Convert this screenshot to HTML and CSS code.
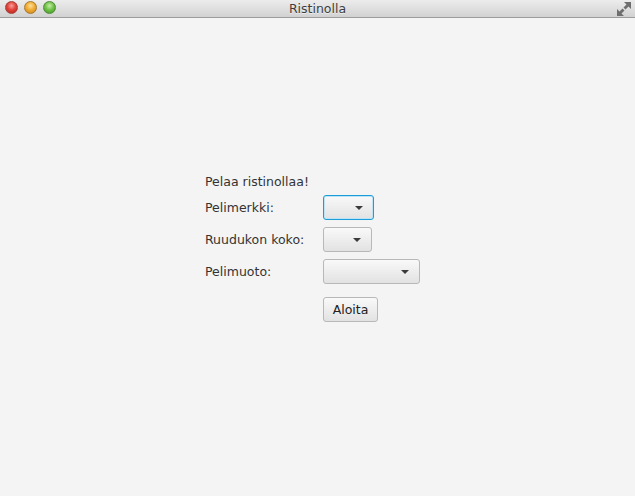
FILE: index.html
```html
<!DOCTYPE html>
<html>
<head>
<meta charset="utf-8">
<link rel="stylesheet" href="styles.css">
<title>Ristinolla</title>
</head>
<body>
<div class="window">
  <div class="titlebar">
    <div class="lights">
      <span class="light red"></span>
      <span class="light orange"></span>
      <span class="light green"></span>
    </div>
    <div class="title">Ristinolla</div>
    <svg class="resize" width="16" height="16" viewBox="0 0 16 16">
      <path d="M8 1 L15 1 L15 8 L12.5 5.5 L9.5 8.5 L7.5 6.5 L10.5 3.5 Z" fill="#6e6e6e"/>
      <path d="M1 8 L1 15 L8 15 L5.5 12.5 L8.5 9.5 L6.5 7.5 L3.5 10.5 Z" fill="#6e6e6e"/>
    </svg>
  </div>
  <div class="content">
    <div class="form">
      <div class="row heading">Pelaa ristinollaa!</div>
      <div class="row r1">
        <span class="label">Pelimerkki:</span>
        <div class="combo focused w50"><span class="arrow"></span></div>
      </div>
      <div class="row r2">
        <span class="label">Ruudukon koko:</span>
        <div class="combo w48"><span class="arrow"></span></div>
      </div>
      <div class="row r3">
        <span class="label">Pelimuoto:</span>
        <div class="combo w96"><span class="arrow"></span></div>
      </div>
      <div class="row r4">
        <span class="label"></span>
        <button class="btn">Aloita</button>
      </div>
    </div>
  </div>
</div>
</body>
</html>
```
FILE: styles.css
```css
html, body {
  margin: 0;
  padding: 0;
  width: 635px;
  height: 496px;
  overflow: hidden;
  background: #f4f4f4;
  font-family: "DejaVu Sans", sans-serif;
}
.window {
  display: flex;
  flex-direction: column;
  height: 496px;
}
.titlebar {
  position: relative;
  height: 17px;
  border-bottom: 1px solid #9c9c9c;
  background: linear-gradient(#ececec, #d2d2d2);
  display: flex;
  align-items: center;
  justify-content: center;
}
.lights {
  position: absolute;
  left: 5px;
  top: 1px;
  display: flex;
  gap: 6px;
}
.light {
  width: 13px;
  height: 13px;
  border-radius: 50%;
  box-sizing: border-box;
  display: block;
}
.red {
  background: radial-gradient(circle at 50% 35%, #f6a19a 0, #e3443b 45%, #b0221a 100%);
  border: 1px solid #a5403a;
}
.orange {
  background: radial-gradient(circle at 50% 35%, #fbe0a0 0, #f1ae35 45%, #c6801a 100%);
  border: 1px solid #a8792f;
}
.green {
  background: radial-gradient(circle at 50% 35%, #c7ecaa 0, #72c34a 45%, #3f8f22 100%);
  border: 1px solid #4f8c39;
}
.title {
  font-family: "DejaVu Sans", sans-serif;
  font-size: 12.5px;
  color: #3d3d3d;
  text-shadow: 0 1px 0 rgba(255,255,255,0.6);
  line-height: 17px;
}
.resize {
  position: absolute;
  right: 3px;
  top: 1px;
}
.content {
  flex: 1;
  padding: 155px 0 0 205px;
  background: #f4f4f4;
}
.form {
  display: flex;
  flex-direction: column;
  font-size: 12.5px;
  color: #333;
}
.row {
  display: flex;
  align-items: center;
}
.heading {
  height: 16px;
}
.r1 { margin-top: 6px; height: 25px; }
.r2 { margin-top: 7px; height: 25px; }
.r3 { margin-top: 7px; height: 25px; }
.r4 { margin-top: 13px; height: 25px; }
.label {
  width: 118px;
  flex: none;
}
.combo {
  position: relative;
  height: 25px;
  box-sizing: border-box;
  border: 1px solid #b8b8b8;
  border-radius: 3px;
  background: linear-gradient(#f9f9f9, #e2e2e2);
}
.combo.focused {
  border-color: #1a9ed8;
  box-shadow: inset 0 0 0 1px #bfe2f4;
}
.w50 { width: 51px; }
.w48 { width: 49px; }
.w96 { width: 97px; }
.arrow {
  position: absolute;
  right: 10px;
  top: 10px;
  width: 0;
  height: 0;
  border-left: 4px solid transparent;
  border-right: 4px solid transparent;
  border-top: 4px solid #3a3a3a;
}
.btn {
  height: 25px;
  width: 55px;
  box-sizing: border-box;
  border: 1px solid #b8b8b8;
  border-radius: 3px;
  background: linear-gradient(#f9f9f9, #e2e2e2);
  font-family: "DejaVu Sans", sans-serif;
  font-size: 12.5px;
  color: #222;
  padding: 0;
}
```
